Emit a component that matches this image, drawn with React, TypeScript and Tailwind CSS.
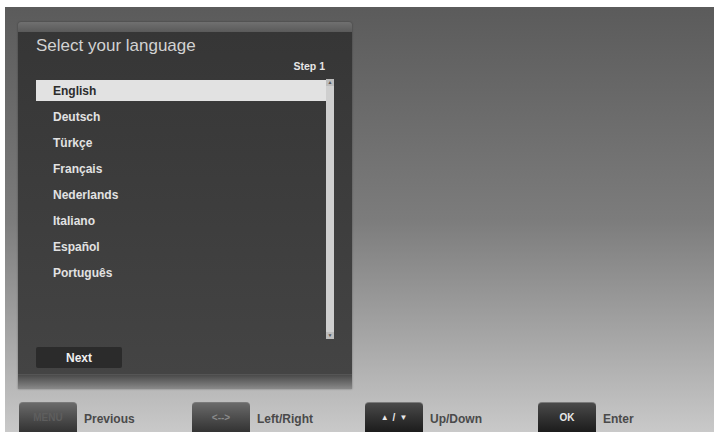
import React from "react";

// ─────────────────────────────────────────────────────────────────────────────
// First-time installation: language picker (TV OSD)
// ─────────────────────────────────────────────────────────────────────────────

const languages = [
  "English",
  "Deutsch",
  "Türkçe",
  "Français",
  "Nederlands",
  "Italiano",
  "Español",
  "Português",
];

function KeyHint({ keyLabel, label, dim }: { keyLabel: React.ReactNode; label: string; dim?: boolean }) {
  return (
    <div className="flex w-[173px] items-start gap-[7px]">
      <div
        className={
          "flex h-[30px] w-[58px] items-center justify-center rounded-t-[4px] border-t border-[#7a7a7a] text-[10px] font-bold " +
          (dim
            ? "bg-gradient-to-b from-[#6a6a6a] to-[#333333] text-[#5e5e5e]"
            : "bg-gradient-to-b from-[#4a4a4a] to-[#1c1c1c] text-[#e8e8e8]")
        }
      >
        {keyLabel}
      </div>
      <span className="pt-[8px] text-[12px] font-bold text-[#4a4a4a]">{label}</span>
    </div>
  );
}

export default function App() {
  return (
    <div
      className="h-[434px] w-[718px] overflow-hidden bg-white pl-[5px] pt-[7px]"
      style={{ fontFamily: '"Liberation Sans", Arial, sans-serif' }}
    >
      <div className="flex h-[425px] w-[709px] flex-col overflow-hidden bg-gradient-to-b from-[#5b5b5b] via-[#7c7c7c] to-[#c9c9c9] pl-[13px] pt-[15px]">
        {/* Panel */}
        <div className="flex h-[368px] w-[334px] flex-col rounded-t-[3px] bg-[#4a4a4a] shadow-[0_0_2px_rgba(0,0,0,0.4)]">
          <div className="h-[10px] rounded-t-[3px] bg-gradient-to-b from-[#707070] to-[#5a5a5a]" />
          <div className="flex flex-1 flex-col bg-gradient-to-b from-[#363636] to-[#444444] pl-[18px] pr-[18px]">
            <h1 className="pt-[3px] text-[17px] leading-[21px] text-[#d2d2d2]">Select your language</h1>
            <div className="flex justify-end pr-[9px] pt-[4px] text-[10.5px] font-bold leading-[12px] text-[#e6e6e6]">
              Step 1
            </div>

            {/* List + scrollbar */}
            <div className="mt-[7px] flex">
              <ul className="w-[290px] pt-[1px]">
                {languages.map((lang, i) => (
                  <li
                    key={lang}
                    className={
                      "mb-[5px] flex h-[21px] items-center pl-[17px] text-[12px] font-bold " +
                      (i === 0 ? "bg-[#e2e2e2] text-[#2c2c2c]" : "text-[#e2e2e2]")
                    }
                  >
                    {lang}
                  </li>
                ))}
              </ul>
              <div className="flex h-[260px] w-[8px] flex-col justify-between bg-[#cfcfcf]">
                <div className="flex h-[7px] items-center justify-center bg-[#bdbdbd] text-[5px] leading-none text-[#555]">▲</div>
                <div className="flex h-[7px] items-center justify-center bg-[#bdbdbd] text-[5px] leading-none text-[#555]">▼</div>
              </div>
            </div>

            <button className="mt-[8px] flex h-[21px] w-[86px] items-center justify-center rounded-[2px] bg-[#2b2b2b] text-[12px] font-bold text-[#f0f0f0]">
              Next
            </button>
          </div>
          <div className="h-[15px] border-t border-[#555] bg-gradient-to-b from-[#4a4a4a] to-[#8a8a8a]" />
        </div>

        {/* Key hints */}
        <div className="flex pl-[1px] pt-[13px]">
          <KeyHint keyLabel="MENU" label="Previous" dim />
          <KeyHint keyLabel={<span className="text-[#8a8a8a]">{"<-->"}</span>} label="Left/Right" dim />
          <KeyHint
            keyLabel={
              <span className="flex items-center gap-[4px] text-[8px]">
                <span>▲</span>
                <span className="text-[10px]">/</span>
                <span>▼</span>
              </span>
            }
            label="Up/Down"
          />
          <KeyHint keyLabel="OK" label="Enter" />
        </div>
      </div>
    </div>
  );
}
